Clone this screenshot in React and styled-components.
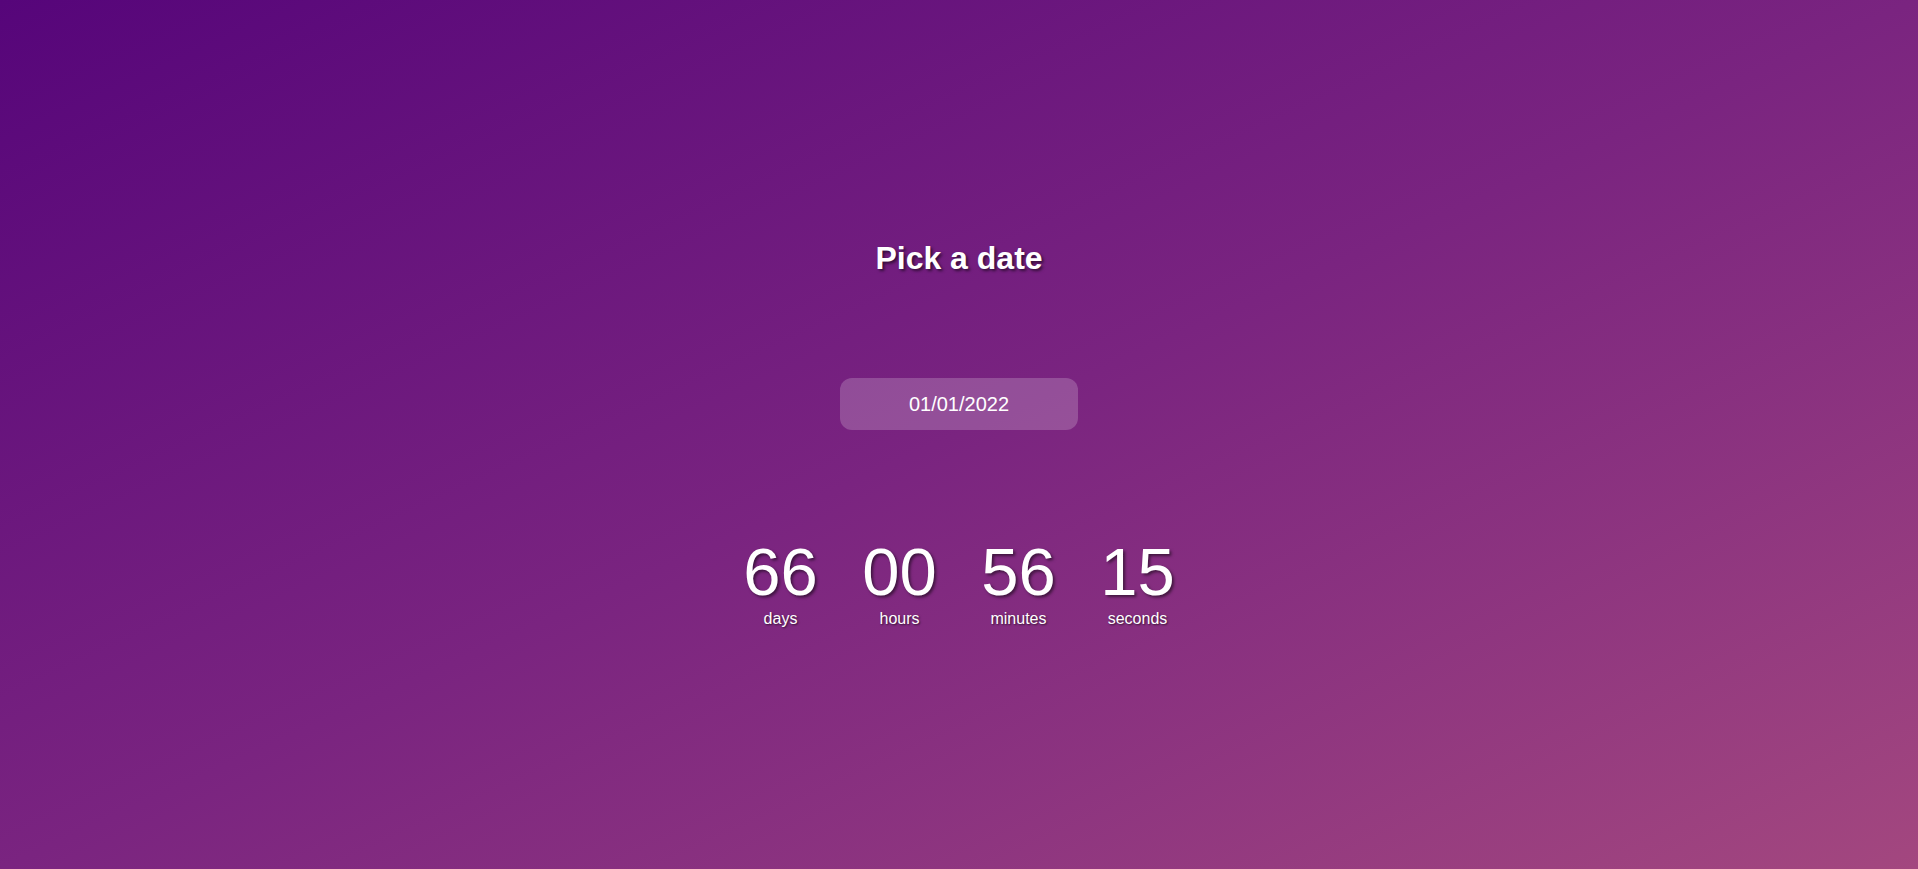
import React, { useState } from 'react';
import styled, { createGlobalStyle } from 'styled-components';

const GlobalStyle = createGlobalStyle`
  html, body {
    margin: 0;
    padding: 0;
    height: 100%;
  }
  body {
    font-family: "Liberation Sans", Arial, sans-serif;
    background: #3a0850;
  }
  #root {
    height: 100%;
  }
`;

const Page = styled.div`
  box-sizing: border-box;
  height: 100vh;
  display: flex;
  flex-direction: column;
  align-items: center;
  padding-top: 240px;
  background: linear-gradient(to bottom right, #56057a 0%, #7a2480 50%, #a3477f 100%);
  color: #fff;
`;

const Title = styled.h1`
  margin: 0;
  font-size: 32px;
  line-height: 37px;
  font-weight: 700;
  text-shadow: 2px 2px 3px rgba(0, 0, 0, 0.55);
`;

const DateInput = styled.input`
  box-sizing: border-box;
  margin-top: 101px;
  width: 238px;
  height: 52px;
  border: none;
  outline: none;
  border-radius: 12px;
  background: rgba(255, 255, 255, 0.2);
  color: #fff;
  font-family: "Liberation Sans", Arial, sans-serif;
  font-size: 20px;
  text-align: center;
`;

const Countdown = styled.div`
  display: flex;
  gap: 44px;
  margin-top: 108px;
`;

const Unit = styled.div`
  display: flex;
  flex-direction: column;
  align-items: center;
  min-width: 75px;
`;

const Number = styled.span`
  font-size: 67px;
  line-height: 67px;
  text-shadow: 2px 2px 3px rgba(0, 0, 0, 0.5);
`;

const Label = styled.span`
  margin-top: 5px;
  font-size: 16px;
  line-height: 18px;
  text-shadow: 1px 1px 2px rgba(0, 0, 0, 0.6);
`;

const units = [
  { value: '66', label: 'days' },
  { value: '00', label: 'hours' },
  { value: '56', label: 'minutes' },
  { value: '15', label: 'seconds' },
];

const App = () => {
  const [date, setDate] = useState('01/01/2022');

  return (
    <Page>
      <GlobalStyle />
      <Title>Pick a date</Title>
      <DateInput value={date} onChange={(e) => setDate(e.target.value)} />
      <Countdown>
        {units.map((u) => (
          <Unit key={u.label}>
            <Number>{u.value}</Number>
            <Label>{u.label}</Label>
          </Unit>
        ))}
      </Countdown>
    </Page>
  );
};

export default App;
